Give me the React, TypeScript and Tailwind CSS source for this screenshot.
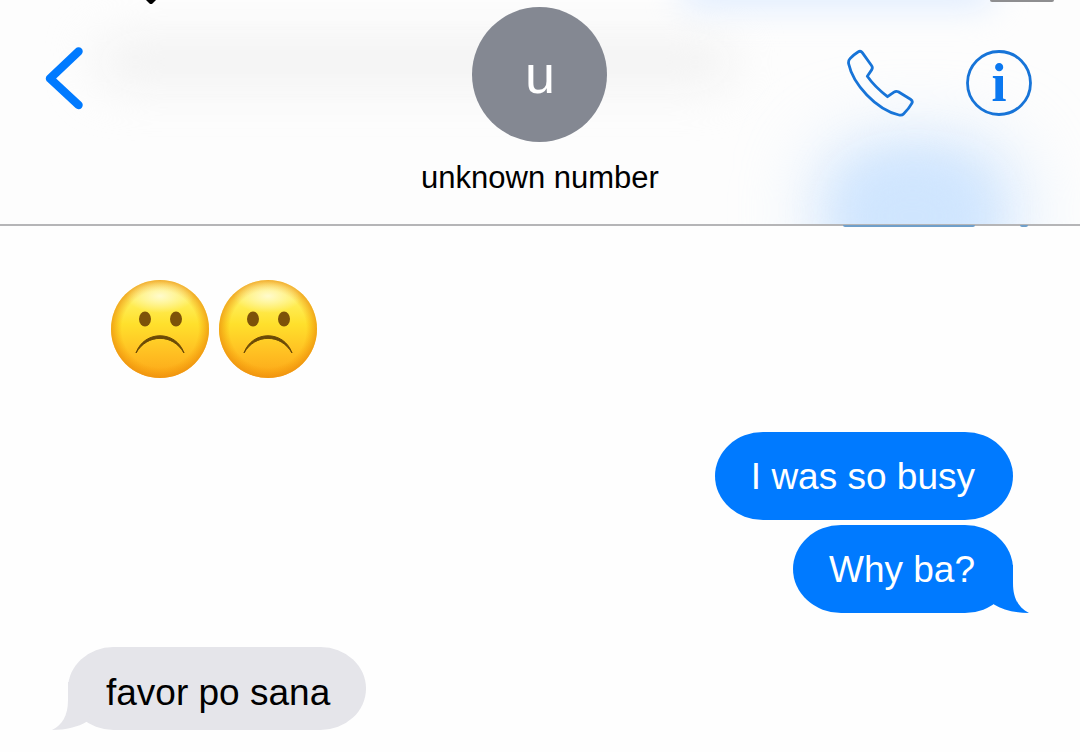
import type { ReactNode } from "react";
import clsx from "clsx";

type Message = {
  id: number;
  text: string;
  mine: boolean;
  tail: boolean;
};

const sent: Message[] = [
  { id: 1, text: "I was so busy", mine: true, tail: false },
  { id: 2, text: "Why ba?", mine: true, tail: true },
];

const received: Message[] = [
  { id: 3, text: "favor po sana", mine: false, tail: true },
];

function FrownEmoji() {
  return (
    <svg viewBox="0 0 100 100" className="size-[100px]" role="img" aria-label="frowning face">
      <defs>
        <linearGradient id="face" x1="0" y1="0" x2="0" y2="1">
          <stop offset="0" stopColor="#ffe85c" />
          <stop offset="0.2" stopColor="#fff05e" />
          <stop offset="0.45" stopColor="#ffe02c" />
          <stop offset="0.75" stopColor="#ffbf22" />
          <stop offset="1" stopColor="#fca618" />
        </linearGradient>
        <radialGradient id="rim">
          <stop offset="0.78" stopColor="#f29200" stopOpacity="0" />
          <stop offset="1" stopColor="#ea8c0c" stopOpacity="0.7" />
        </radialGradient>
        <radialGradient id="shine">
          <stop offset="0" stopColor="#fffde0" stopOpacity="0.85" />
          <stop offset="1" stopColor="#fffde0" stopOpacity="0" />
        </radialGradient>
      </defs>
      <circle cx="50" cy="50" r="49" fill="url(#face)" />
      <circle cx="50" cy="50" r="49" fill="url(#rim)" />
      <ellipse cx="50" cy="17" rx="34" ry="17" fill="url(#shine)" />
      <ellipse cx="35" cy="40" rx="6" ry="7.5" fill="#7d5209" />
      <ellipse cx="66" cy="40" rx="6" ry="7.5" fill="#7d5209" />
      <path d="M26 74 C34 51 66 51 74 74 C63 54.500 37 54.500 26 74 Z" fill="#6b4a06" stroke="#6b4a06" strokeWidth="1" strokeLinejoin="round" />
    </svg>
  );
}

function Bubble({ message }: { message: Message }) {
  return (
    <div
      className={clsx(
        "relative flex items-center rounded-[48px/44px] text-[37px]",
        message.mine ? "h-[88px] bg-[#007aff] pl-9 pr-[38px] pt-0.5 text-white" : "h-[83px] bg-[#e5e5ea] pl-[38px] pr-9 pt-2 text-black"
      )}
    >
      <p>{message.text}</p>
      {message.tail && (
        <svg
          viewBox="0 0 40 48"
          className={clsx(
            "absolute bottom-0 h-12 w-10",
            message.mine ? "-right-4 text-[#007aff]" : "-left-4 -scale-x-100 text-[#e5e5ea]"
          )}
          aria-hidden="true"
        >
          <path d="M0 0 H24 V18 C24 34 30 43 40 48 C26 48 14 45 5 39.500 L0 30 Z" fill="currentColor" />
        </svg>
      )}
    </div>
  );
}

function IconButton({ label, children }: { label: string; children: ReactNode }) {
  return (
    <button type="button" aria-label={label} className="cursor-pointer">
      {children}
    </button>
  );
}

function Header() {
  return (
    <header className="relative h-[226px] border-b-2 border-[#b5b5b7] bg-[#fdfdfd]">
      {/* content scrolled beneath the translucent bar */}
      <div className="absolute inset-0 overflow-hidden" aria-hidden="true">
        <div className="absolute left-[9%] right-[32%] top-10 h-11 rounded-full bg-[#f1f1f1] blur-xl" />
        <div className="absolute left-[63%] right-[8%] -top-6 h-8 rounded-full bg-[#dfecff] blur-lg" />
        <div className="absolute left-[76%] right-[6%] top-[146px] h-32 rounded-[48px] bg-[#cfe5fe] blur-2xl" />
        <div className="absolute left-[78%] right-[9%] top-[160px] h-28 rounded-[48px] bg-[#cfe5fe] blur-xl" />
        <svg viewBox="0 0 10 4" className="absolute left-[146px] top-0 h-1 w-2.5">
          <path d="M0 0 H10 L6.500 3.500 Q5 4.500 3.500 3.500 Z" fill="#000" />
        </svg>
        <div className="absolute right-[26px] top-0 h-0.5 w-16 rounded-b-lg bg-[#8e8e90]" />
      </div>
      <div className="absolute -bottom-[3px] right-[105px] h-0.5 w-[132px] rounded-b-full bg-[#6f9fca]" aria-hidden="true" />
      <div className="absolute -bottom-[3px] right-[52px] h-0.5 w-2 rounded-b-full bg-[#6f9fca]" aria-hidden="true" />

      <div className="relative grid grid-cols-[1fr_auto_1fr] items-start">
        <div className="pl-11 pt-[46px]">
          <IconButton label="Back">
            <svg viewBox="0 0 40 64" className="h-16 w-10" fill="none" stroke="#007aff" strokeWidth="8.500" strokeLinecap="round" strokeLinejoin="round">
              <path d="M34.500 5.500 L6 32.500 L34.500 59" />
            </svg>
          </IconButton>
        </div>
        <div className="flex flex-col items-center pt-[7px]">
          <div className="flex size-[135px] items-center justify-center rounded-full bg-[#848892] text-[54px] text-white">
            u
          </div>
          <h1 className="mt-4 text-[31px] leading-10 text-black">unknown number</h1>
        </div>
        <div className="flex justify-end gap-[51px] pr-[47px] pt-[49px]">
          <IconButton label="Call">
            <svg viewBox="0 0 68 68" className="size-[68px]" fill="none" stroke="#1774d8" strokeWidth="2.800" strokeLinejoin="round">
              <path d="M12 3 Q14.500 1.200 16.300 3.600 L25.500 16.500 Q27 18.600 25.800 20.600 L21.300 27.300 C26 34 33.500 41.500 41.500 47.700 L48 43.200 Q50 41.800 52.300 42.800 L64.500 50.300 Q67.200 52 65.800 54.300 C63.500 58.500 61 61.500 57.500 65 Q56 66.600 53 66 C30 60.500 7 35 2.700 15 Q2 11.800 4 9.600 Q7.500 5.800 12 3 Z" />
            </svg>
          </IconButton>
          <IconButton label="Details">
            <svg viewBox="0 0 68 68" className="size-[68px]">
              <circle cx="34" cy="34" r="31.500" fill="none" stroke="#1774d8" strokeWidth="2.800" />
              <text x="34" y="52" textAnchor="middle" fontFamily="Liberation Serif, serif" fontWeight="700" fontSize="54" fill="#0b78f0">
                i
              </text>
            </svg>
          </IconButton>
        </div>
      </div>
    </header>
  );
}

export default function App() {
  return (
    <div className="min-h-screen overflow-hidden bg-[#fefefe] font-['Liberation_Sans',sans-serif]">
      <Header />
      <main className="flex flex-col pb-6 pt-[53px]">
        <div className="flex gap-2 pl-[110px]">
          <FrownEmoji />
          <FrownEmoji />
        </div>
        <div className="mt-[53px] flex flex-col items-end gap-[5px] pr-[67px]">
          {sent.map((message) => (
            <Bubble key={message.id} message={message} />
          ))}
        </div>
        <div className="mt-[34px] flex flex-col items-start pl-[68px]">
          {received.map((message) => (
            <Bubble key={message.id} message={message} />
          ))}
        </div>
      </main>
    </div>
  );
}
